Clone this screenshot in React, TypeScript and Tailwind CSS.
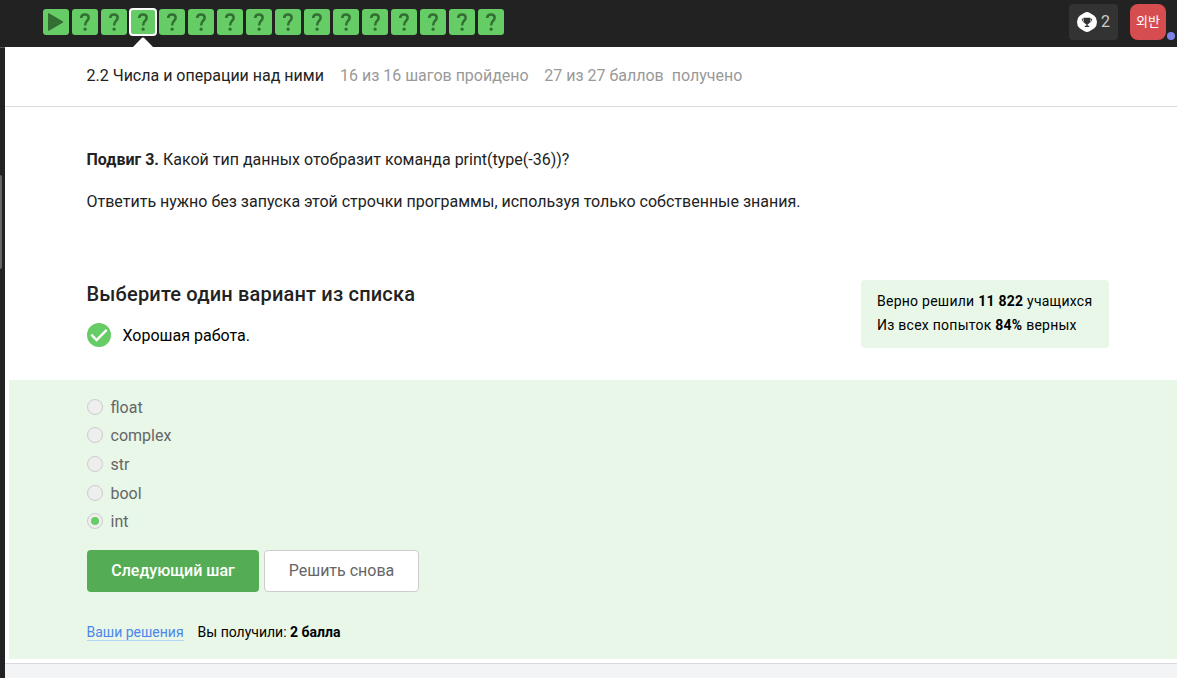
const steps = Array.from({ length: 16 }, (_, i) => i);
const options = ['float', 'complex', 'str', 'bool', 'int'];
const rowHeights = ['h-7', 'h-[29px]', 'h-[29px]', 'h-7', 'h-[29px]'];

function Step({ index }: { index: number }) {
  const active = index === 3;
  return (
    <div
      className={`relative flex size-[26px] items-center justify-center rounded-[3px] bg-[#66cc66] ${
        active ? 'outline-2 -outline-offset-1 outline-white' : ''
      }`}
    >
      {index === 0 ? (
        <svg className="size-[26px]" viewBox="0 0 26 26">
          <path d="M5.5 4.5v17L20 13z" fill="#336e33" stroke="#336e33" strokeWidth="1" strokeLinejoin="round" />
        </svg>
      ) : (
        <svg className="size-[26px]" viewBox="0 0 26 26" fill="none">
          <path
            d="M9.200 9C9.200 6.800 10.600 5.500 13 5.500c2.500 0 3.700 1.300 3.700 3.300 0 1.500-.8 2.300-1.900 3.400-1.200 1.100-1.700 1.900-1.700 4.200"
            stroke="#336e33"
            strokeWidth="2.500"
          />
          <circle cx="13.100" cy="20.200" r="1.600" fill="#336e33" />
        </svg>
      )}
      {active && (
        <svg className="absolute left-[3px] top-[28px] h-[10px] w-5" viewBox="0 0 20 10">
          <path d="M0 10L9 .8Q10 0 11 .8L20 10z" fill="#fff" />
        </svg>
      )}
    </div>
  );
}

function Header() {
  return (
    <header className="flex h-[47px] shrink-0 items-start bg-[#222] pl-[43px]">
      <div className="flex gap-[3px] pt-[9px]">
        {steps.map((i) => (
          <Step key={i} index={i} />
        ))}
      </div>
      <div className="relative ml-auto flex gap-3 pr-[11px] pt-1">
        <div className="flex h-9 w-[49px] items-center rounded-[4px] bg-[#333] pl-2">
          <svg className="size-5" viewBox="0 0 20 20">
            <path d="M7.500.8Q10-.8 12.500.8L17.300 3.800Q20 6 20 10t-2.700 6.200L12.500 19.200Q10 20.800 7.500 19.200L2.700 16.200Q0 14 0 10t2.700-6.200z" fill="#fff" />
            <path d="M6.700 5.700h6.600v3c0 2-1.200 3.100-2.600 3.500v1.500h1.500V15H7.800v-1.300h1.500v-1.500c-1.400-.4-2.600-1.500-2.600-3.500z" fill="#333" />
            <path d="M7 7H5.300c0 1.900.6 2.800 2 3.100M13 7h1.700c0 1.900-.6 2.800-2 3.100" fill="none" stroke="#333" strokeWidth=".9" />
          </svg>
          <span className="ml-1 text-[16px] leading-5 text-[#ccc]">2</span>
        </div>
        <div className="flex size-9 items-center justify-center rounded-[8px] bg-[#d64d4f] text-[13px] text-white">
          외반
        </div>
        <span className="absolute right-[2px] top-8 size-2 rounded-full bg-[#7d83e6]" />
      </div>
    </header>
  );
}

export default function App() {
  return (
    <div className="flex h-[678px] w-[1177px] flex-col overflow-hidden bg-white font-[Roboto,'Noto_Sans_CJK_KR',sans-serif] text-[16px] text-[#222]">
      <Header />
      <div className="flex min-h-0 flex-1">
        <aside className="w-[5px] shrink-0 border-t border-[#555] bg-[#222] pt-[127px]">
          <div className="h-[94px] w-[2px] rounded-r-[2px] bg-[#666]" />
        </aside>
        <main className="flex min-w-0 flex-1 flex-col">
          <div className="flex h-[60px] shrink-0 items-center border-b border-[#d9dadd] pb-[2px] pl-[81.5px] leading-6">
            <span>2.2 Числа и операции над ними</span>
            <span className="ml-4 text-[#999]">16 из 16 шагов пройдено</span>
            <span className="ml-[15.500px] whitespace-pre text-[#999]">27 из 27 баллов  получено</span>
          </div>

          <section className="h-[173px] shrink-0 pl-[81.5px] pt-10 leading-[26px]">
            <p>
              <b>Подвиг 3.</b> Какой тип данных отобразит команда print(type(-36))?
            </p>
            <p className="mt-4">Ответить нужно без запуска этой строчки программы, используя только собственные знания.</p>
          </section>

          <section className="flex h-[100px] shrink-0 justify-between pl-[82px] pr-[68px]">
            <div>
              <h2 className="-ml-[.5px] text-[20px] font-medium leading-7 tracking-[.18px]">Выберите один вариант из списка</h2>
              <div className="mt-[15px] flex h-6 items-center gap-3 text-black">
                <svg className="size-6" viewBox="0 0 24 24">
                  <circle cx="12" cy="12" r="12" fill="#66cc66" />
                  <path d="M4.300 11.700l5.300 5.300L19.700 6.900" fill="none" stroke="#fff" strokeWidth="2.400" />
                </svg>
                <span className="-ml-[.5px] pt-[2px] leading-6">Хорошая работа.</span>
              </div>
            </div>
            <div className="h-[68px] w-[248px] rounded-[4px] bg-[#e8f7e8] pl-4 pt-[9px] text-[14px] leading-6 tracking-[.25px] text-black">
              <p>Верно решили <b>11 822</b> учащихся</p>
              <p>Из всех попыток <b>84%</b> верных</p>
            </div>
          </section>

          <section className="ml-1 h-[279px] shrink-0 bg-[#e8f7e8] pl-[78px] pt-[13px]">
            <div className="h-[157px] text-[#666]">
              {options.map((option, i) => (
                <div key={option} className={`flex items-start ${rowHeights[i]}`}>
                  <span className="mt-[6px] flex size-4 items-center justify-center rounded-full border border-[#ccc] bg-[#eee]">
                    {option === 'int' && <span className="size-2 rounded-full bg-[#66cc66]" />}
                  </span>
                  <span className="ml-[7.500px] leading-[30px]">{option}</span>
                </div>
              ))}
            </div>
            <div className="flex gap-[5px]">
              <button className="h-[42px] w-[172px] rounded-[4px] bg-[#54ad54] font-medium text-white">Следующий шаг</button>
              <button className="h-[42px] w-[155px] rounded-[4px] border border-[#ccc] bg-white text-[#666]">Решить снова</button>
            </div>
            <div className="-ml-[.5px] mt-8 flex text-[14px] leading-4 text-black">
              <a className="border-b border-[#b1d8f7] text-[#4c86ec]">Ваши решения</a>
              <span className="ml-[14px]">Вы получили: <b>2 балла</b></span>
            </div>
          </section>
          <footer className="mt-1 flex-1 border-t border-[#d9dadd] bg-[#f3f4f6]" />
        </main>
      </div>
    </div>
  );
}
